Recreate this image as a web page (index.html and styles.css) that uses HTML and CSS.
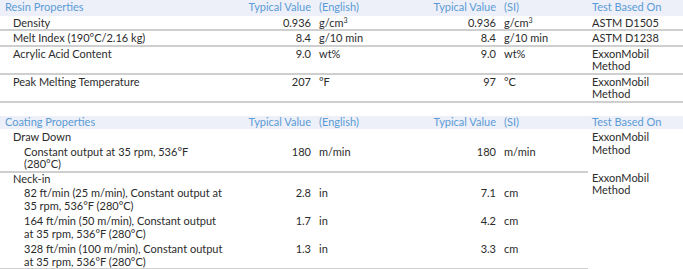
FILE: index.html
```html
<!DOCTYPE html>
<html lang="en">
<head>
<meta charset="utf-8">
<title>Properties</title>
<link rel="stylesheet" href="styles.css">
</head>
<body>
<table class="props">
  <colgroup>
    <col class="c-name"><col class="c-val"><col class="c-unit"><col class="c-val2"><col class="c-unit2"><col class="c-test">
  </colgroup>
  <thead>
    <tr class="head">
      <th class="h-name">Resin Properties</th>
      <th class="num">Typical Value</th>
      <th class="unit">(English)</th>
      <th class="num">Typical Value</th>
      <th class="unit">(SI)</th>
      <th class="test">Test Based On</th>
    </tr>
  </thead>
  <tbody>
    <tr class="row">
      <td class="name">Density</td>
      <td class="num">0.936</td>
      <td class="unit">g/cm<sup>3</sup></td>
      <td class="num">0.936</td>
      <td class="unit">g/cm<sup>3</sup></td>
      <td class="test">ASTM D1505</td>
    </tr>
    <tr class="row">
      <td class="name">Melt Index (190°C/2.16 kg)</td>
      <td class="num">8.4</td>
      <td class="unit">g/10 min</td>
      <td class="num">8.4</td>
      <td class="unit">g/10 min</td>
      <td class="test">ASTM D1238</td>
    </tr>
    <tr class="row">
      <td class="name">Acrylic Acid Content</td>
      <td class="num">9.0</td>
      <td class="unit">wt%</td>
      <td class="num">9.0</td>
      <td class="unit">wt%</td>
      <td class="test">ExxonMobil Method</td>
    </tr>
    <tr class="row">
      <td class="name">Peak Melting Temperature</td>
      <td class="num">207</td>
      <td class="unit">°F</td>
      <td class="num">97</td>
      <td class="unit">°C</td>
      <td class="test">ExxonMobil Method</td>
    </tr>
  </tbody>
</table>

<table class="props second">
  <colgroup>
    <col class="c-name"><col class="c-val"><col class="c-unit"><col class="c-val2"><col class="c-unit2"><col class="c-test">
  </colgroup>
  <thead>
    <tr class="head">
      <th class="h-name">Coating Properties</th>
      <th class="num">Typical Value</th>
      <th class="unit">(English)</th>
      <th class="num">Typical Value</th>
      <th class="unit">(SI)</th>
      <th class="test">Test Based On</th>
    </tr>
  </thead>
  <tbody>
    <tr class="group first">
      <td class="name">Draw Down</td>
      <td></td><td></td><td></td><td></td>
      <td class="test" rowspan="2">ExxonMobil Method</td>
    </tr>
    <tr class="sub last">
      <td class="subname">Constant output at 35 rpm, 536°F (280°C)</td>
      <td class="num">180</td>
      <td class="unit">m/min</td>
      <td class="num">180</td>
      <td class="unit">m/min</td>
    </tr>
    <tr class="group">
      <td class="name">Neck-in</td>
      <td></td><td></td><td></td><td></td>
      <td class="test" rowspan="4">ExxonMobil Method</td>
    </tr>
    <tr class="sub">
      <td class="subname">82 ft/min (25 m/min), Constant output at 35 rpm, 536°F (280°C)</td>
      <td class="num">2.8</td>
      <td class="unit">in</td>
      <td class="num">7.1</td>
      <td class="unit">cm</td>
    </tr>
    <tr class="sub">
      <td class="subname">164 ft/min (50 m/min), Constant output at 35 rpm, 536°F (280°C)</td>
      <td class="num">1.7</td>
      <td class="unit">in</td>
      <td class="num">4.2</td>
      <td class="unit">cm</td>
    </tr>
    <tr class="sub last">
      <td class="subname">328 ft/min (100 m/min), Constant output at 35 rpm, 536°F (280°C)</td>
      <td class="num">1.3</td>
      <td class="unit">in</td>
      <td class="num">3.3</td>
      <td class="unit">cm</td>
    </tr>
  </tbody>
</table>
</body>
</html>
```

FILE: styles.css
```css
html, body {
  margin: 0;
  padding: 0;
  background: #ffffff;
}

body {
  font-family: Lato, "Liberation Sans", sans-serif;
  font-size: 11px;
  line-height: 12.5px;
  color: #2b2b2b;
}

.props {
  width: 683px;
  border-collapse: collapse;
  table-layout: fixed;
}

.second {
  margin-top: 13px;
}

.c-name { width: 224px; }
.c-val { width: 87px; }
.c-unit { width: 99px; }
.c-val2 { width: 86px; }
.c-unit2 { width: 92px; }
.c-test { width: 95px; }

th, td {
  padding: 0;
  vertical-align: top;
  text-align: left;
  font-weight: normal;
}

.head th {
  background: #edf0f8;
  color: #5b9bd6;
  padding-top: 1px;
  padding-bottom: 2px;
}

.second .head th {
  padding-top: 0;
  padding-bottom: 1px;
}

.head th.h-name { padding-left: 5px; }

.num { text-align: right; }
.unit { padding-left: 8px; }
.head th.unit { padding-left: 8px; }
.test { padding-left: 4px; }
.head th.test { padding-left: 4px; }

.name { padding-left: 13px; }
.subname { padding-left: 24px; padding-right: 0; }

.row td {
  border-bottom: 2px solid #cfcfcf;
  padding-top: 1px;
}

.group td { padding-top: 0; padding-bottom: 2px; }
.group.first td { padding-top: 2px; }
.group td.test { padding-bottom: 0; }
.sub td { padding-bottom: 3px; }
.sub.last td { border-bottom: 2px solid #cfcfcf; padding-bottom: 0; }

sup {
  font-size: 7px;
  line-height: 0;
  vertical-align: 4px;
}
```
